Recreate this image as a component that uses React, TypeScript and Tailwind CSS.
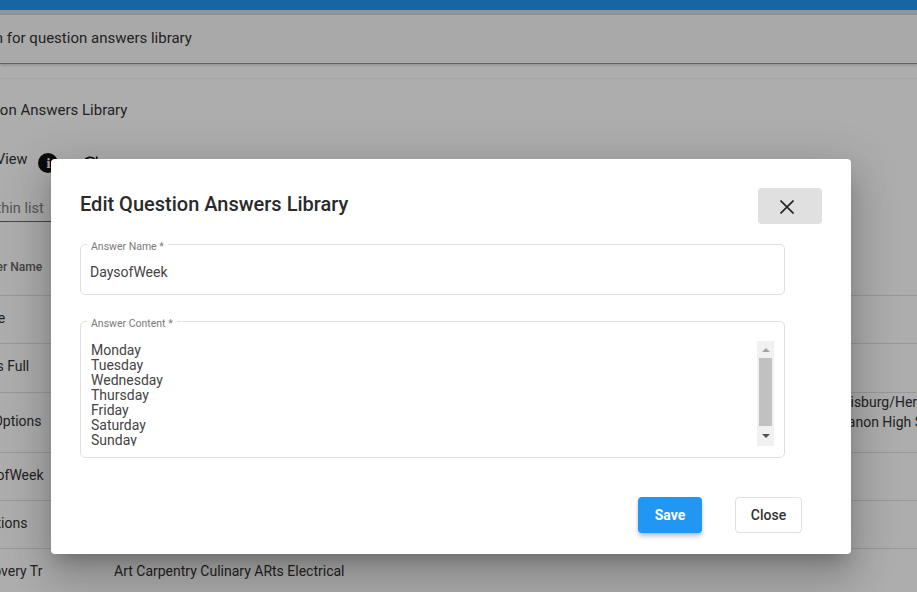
import React from "react";

const rows = [
  { name: "Range", h: "h-[48px] pb-[2px]", content: null },
  { name: "Hours Full", h: "h-[49px] pb-[4px]", content: null },
  { name: "Bus Options", h: "h-[60px] pb-[2px]", content: ["Lewisburg/Hershey High School", "Lebanon High School"] },
  { name: "DaysofWeek", h: "h-[48px] pb-[2px]", content: null },
  { name: "Locations", h: "h-[48px] pb-[2px]", content: null },
  { name: "Discovery Tr", h: "h-[48px] pb-[2px]", content: null, art: "Art Carpentry Culinary ARts Electrical" },
];

function Row({ name, h, content, art }: { name: string; h: string; content: string[] | null; art?: string }) {
  return (
    <div className={`flex items-center border-b border-[#e0e0e0] text-[14px] text-[#333] whitespace-nowrap ${h}`}>
      <div className="w-[114px] shrink-0">
        <span className="-ml-[34px] inline-block">{name}</span>
      </div>
      {art && <div>{art}</div>}
      {content && (
        <div className="ml-[711px] pb-[20px] leading-[20px]">
          {content.map((c) => (
            <div key={c}>{c}</div>
          ))}
        </div>
      )}
    </div>
  );
}

function Field({ label, children, h }: { label: string; children: React.ReactNode; h: string }) {
  return (
    <fieldset className={`border border-[#e0e0e0] rounded-[5px] pl-[6px] pr-[10px] ${h}`}>
      <legend className="px-[4px] pt-[4px] text-[10.5px] leading-[11px] text-[#7a7a7a]">{label}</legend>
      {children}
    </fieldset>
  );
}

export default function App() {
  return (
    <div className="relative h-[592px] w-[917px] overflow-hidden bg-white font-['Roboto',sans-serif]">
      <div className="h-[10px] bg-[#2196f3]" />
      <div className="h-[5px] bg-[#dcdcdc]" />
      <div className="h-[49px] flex items-center border-b border-[#8f8f8f] bg-[#fafafa] shadow-[0_1px_3px_rgba(0,0,0,0.2)] text-[15px] text-[#333] whitespace-nowrap">
        <span className="-ml-[43px] pb-[1px]">Search for question answers library</span>
      </div>
      <div className="mt-[14px] border-t border-[#f2f2f2]">
        <div className="h-[62px] flex items-center text-[15px] text-[#333] whitespace-nowrap">
          <span className="-ml-[43px]">Question Answers Library</span>
        </div>
        <div className="h-[34px] flex items-start text-[14.5px] text-[#333] whitespace-nowrap">
          <span className="-ml-[4px] mt-[8px]">View</span>
          <span className="ml-[11px] mt-[12px] w-[20px] h-[20px] rounded-full bg-[#111] text-white flex items-center justify-center text-[14px] font-bold font-['Liberation_Serif',serif]">i</span>
          <svg className="ml-[22px] mt-[13px]" width="20" height="20" viewBox="0 0 24 24" fill="none" stroke="#111" strokeWidth="2"><path d="M20 12a8 8 0 1 1-2.3-5.7L20 8.5M20 3v5.5h-5.5" /></svg>
        </div>
        <div className="h-[47px] pt-[23px] w-[60px] border-b border-[#666] text-[14.5px] leading-[21px] text-[#808080] whitespace-nowrap overflow-hidden">
          <span className="-ml-[66px] inline-block">Search within list</span>
        </div>
        <div className="h-[74px] pt-[37px] border-b border-[#e0e0e0] text-[12px] leading-[16px] text-[#666] whitespace-nowrap">
          <span className="-ml-[33px] inline-block font-medium">Answer Name</span>
        </div>
        {rows.map((r) => (
          <Row key={r.name} {...r} />
        ))}
      </div>

      <div className="absolute inset-0 bg-black/32" />

      <div className="absolute left-[51px] top-[159px] w-[800px] h-[395px] rounded-[4px] bg-white pl-[29px] pr-[29px] pt-[29px] shadow-[0_11px_15px_-7px_rgba(0,0,0,0.2),0_24px_38px_3px_rgba(0,0,0,0.14),0_9px_46px_8px_rgba(0,0,0,0.12)]">
        <div className="flex items-start justify-between h-[36px]">
          <h2 className="text-[20px] leading-[32px] font-medium text-[#2a2a2a]">Edit Question Answers Library</h2>
          <button className="w-[64px] h-[36px] rounded-[4px] bg-[#e0e0e0] flex items-center justify-center pr-[6px] pt-[2px]">
            <svg width="14" height="14" viewBox="0 0 14 14" stroke="#222" strokeWidth="1.6" fill="none"><path d="M0.5 0.5 13.5 13.5M13.5 0.5 0.5 13.5" /></svg>
          </button>
        </div>
        <div className="w-[705px] mt-[13px]">
          <Field label="Answer Name *" h="h-[58px]">
            <div className="pl-[3px] pt-[10px] text-[14px] leading-[20px] text-[#444]">DaysofWeek</div>
          </Field>
          <div className="h-[19px]" />
          <Field label="Answer Content *" h="h-[144px]">
            <div className="flex pl-[4px] pt-[12px] h-[120px]">
              <div className="flex-1 h-[103px] mt-[2px] overflow-hidden text-[14px] leading-[15px] text-[#444]">
                {["Monday", "Tuesday", "Wednesday", "Thursday", "Friday", "Saturday", "Sunday"].map((d) => (
                  <div key={d}>{d}</div>
                ))}
              </div>
              <div className="w-[17px] h-[105px] bg-[#f1f1f1] flex flex-col items-center">
                <div className="h-[17px] flex items-center justify-center">
                  <div className="w-0 h-0 border-x-[4px] border-x-transparent border-b-[4px] border-b-[#a3a3a3]" />
                </div>
                <div className="w-[13px] h-[68px] bg-[#c1c1c1]" />
                <div className="flex-1 flex items-center justify-center">
                  <div className="w-0 h-0 border-x-[4px] border-x-transparent border-t-[4px] border-t-[#505050]" />
                </div>
              </div>
            </div>
          </Field>
        </div>
        <div className="flex mt-[39px] ml-[558px]">
          <button className="w-[64px] h-[36px] rounded-[4px] bg-[#2196f3] text-white text-[14px] font-bold shadow-[0_2px_4px_-1px_rgba(0,0,0,0.2),0_4px_5px_rgba(0,0,0,0.14)]">Save</button>
          <button className="ml-[33px] w-[67px] h-[36px] rounded-[4px] bg-white border border-[#e0e0e0] text-[#333] text-[14px] font-medium">Close</button>
        </div>
      </div>
    </div>
  );
}
